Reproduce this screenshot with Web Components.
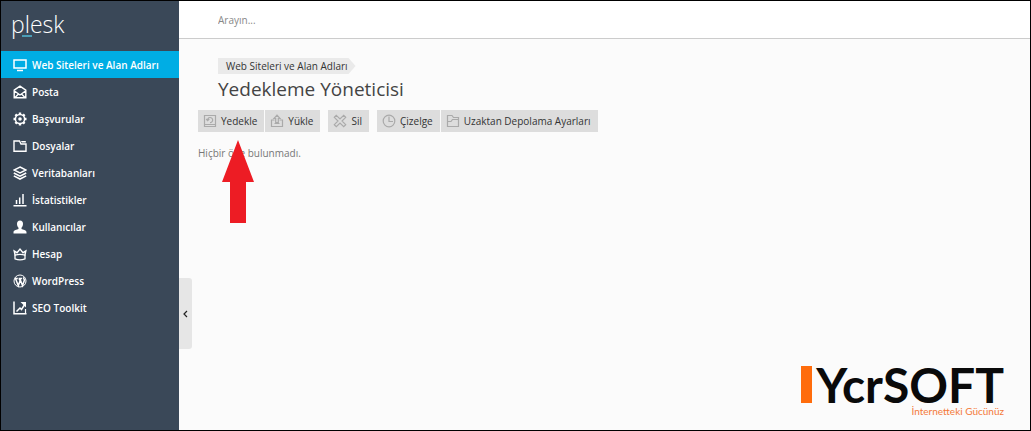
<!DOCTYPE html>
<html lang="tr">
<head>
<meta charset="utf-8">
<meta name="viewport" content="width=device-width, initial-scale=1">
<title>Yedekleme Yöneticisi</title>
<style>
  html, body { margin: 0; }
  body { font: 10px/16px "Open Sans", "Noto Sans", sans-serif; color: #333; background: #fbfbfb; }
</style>
</head>
<body>
<panel-shell>
  <plesk-brand slot="side"></plesk-brand>
  <side-nav slot="side">
    <nav-item icon="screen" active>Web Siteleri ve Alan Adları</nav-item>
    <nav-item icon="mail">Posta</nav-item>
    <nav-item icon="gear">Başvurular</nav-item>
    <nav-item icon="folder">Dosyalar</nav-item>
    <nav-item icon="layers">Veritabanları</nav-item>
    <nav-item icon="chart">İstatistikler</nav-item>
    <nav-item icon="user">Kullanıcılar</nav-item>
    <nav-item icon="crown">Hesap</nav-item>
    <nav-item icon="wordpress">WordPress</nav-item>
    <nav-item icon="seo">SEO Toolkit</nav-item>
  </side-nav>
  <search-bar slot="top"></search-bar>
  <page-heading>
    <crumb-link slot="path">Web Siteleri ve Alan Adları</crumb-link>
    Yedekleme Yöneticisi
  </page-heading>
  <tool-bar>
    <tool-group>
      <tool-button icon="backup">Yedekle<pointer-arrow slot="marker"></pointer-arrow></tool-button>
      <tool-button icon="upload">Yükle</tool-button>
    </tool-group>
    <tool-group><tool-button icon="remove">Sil</tool-button></tool-group>
    <tool-group>
      <tool-button icon="clock">Çizelge</tool-button>
      <tool-button icon="storage">Uzaktan Depolama Ayarları</tool-button>
    </tool-group>
  </tool-bar>
  <empty-note>Hiçbir öğe bulunmadı.</empty-note>
  <company-mark slot="foot"></company-mark>
</panel-shell>

<script>
const ICONS = {
  screen: '<path d="M1 2h12v8H1z" fill="none" stroke="currentColor" stroke-width="1.5"/><path d="M4 12.5h6" stroke="currentColor" stroke-width="1.5"/>',
  mail: '<path d="M1.2 5.2 7 1.2l5.800 4v7.500H1.200zM1.500 6 7 10l5.500-4M2 12.500l3.500-3.500M12 12.500 8.500 9" fill="none" stroke="currentColor" stroke-width="1.400"/>',
  gear: '<circle cx="7" cy="7" r="4.600" fill="none" stroke="currentColor" stroke-width="1.500"/><circle cx="7" cy="7" r="1.800" fill="currentColor"/><path d="M7 .5v2M7 11.500v2M.5 7h2M11.500 7h2M2.400 2.400l1.400 1.400M10.200 10.200l1.400 1.400M11.600 2.400l-1.400 1.400M3.800 10.200l-1.400 1.400" stroke="currentColor" stroke-width="2.400"/>',
  folder: '<path d="M1 2h5.500l1.500 3h5v7.200H1z" fill="none" stroke="currentColor" stroke-width="1.400"/><path d="M8 2h4.800v1.600H8.800z" fill="currentColor"/>',
  layers: '<path d="M7 1 13 4 7 7 1 4z" fill="none" stroke="currentColor" stroke-width="1.400"/><path d="M.8 7 7 10.100 13.200 7M.8 9.900 7 13l6.200-3.100" fill="none" stroke="currentColor" stroke-width="1.600"/>',
  chart: '<path d="M.5 12.800h13M3.500 7v4M6.700 4.500V11M10 1v10" fill="none" stroke="currentColor" stroke-width="1.500"/>',
  user: '<path d="M7 .5c2 0 3 1.300 3 3.200 0 1.600-.6 3.200-1.500 4v1.400c1.500.9 5 1 5 3.100v1.300H.5v-1.300c0-2.100 3.500-2.200 5-3.100V7.700C4.600 6.900 4 5.300 4 3.700 4 1.800 5 .5 7 .5z" fill="currentColor"/>',
  crown: '<path d="m2.200 8.500-1-4.600L4 5.700 7 2l3 3.700 2.800-1.800-1 4.600" fill="none" stroke="currentColor" stroke-width="1.400"/><path d="M2 8.200c3-1 7-1 10 0v3.600c-3 1.200-7 1.200-10 0z" fill="none" stroke="currentColor" stroke-width="1.300"/>',
  wordpress: '<circle cx="7" cy="7" r="6" fill="none" stroke="currentColor" stroke-width="1"/><path d="M1.800 4.600h3M2.600 4.700l2.700 7 1.800-4.900-1-2.200M5.600 4.600h3.500M7 5l2.500 6.500 1.800-4.900c.4-1.500-1.200-2-.6-3.200" fill="none" stroke="currentColor" stroke-width="1.500"/>',
  seo: '<path d="M1 .5v12.300h12.500M3.500 10.500 7 7l1.500 1.500L12 3" fill="none" stroke="currentColor" stroke-width="1.500"/><path d="M7.500 1h5.500v5.500z" fill="currentColor"/><path d="M12.500 8v5" stroke="currentColor" stroke-width="1.200"/>',
  backup: '<path d="M1.500 1.500h11v11h-11zM1.500 10.500h11M4.500 6.500a2.600 2.600 0 1 1 2.500 2.200M3.200 5l1.400 1.600L6.300 5" fill="none" stroke="currentColor" stroke-width="1.200"/>',
  upload: '<path d="M4.500 6H1.500v6.500h11V6H9.500M4.500 9.500h5M5.700 8.500v-4H4L7 1.200l3 3.300H8.300v4z" fill="none" stroke="currentColor" stroke-width="1.200"/>',
  remove: '<path d="M3.300 1.300 7 5l3.700-3.700 2 2L9 7l3.700 3.700-2 2L7 9l-3.700 3.700-2-2L5 7 1.300 3.300z" fill="none" stroke="currentColor" stroke-width="1.200"/>',
  clock: '<circle cx="7" cy="7" r="5.800" fill="none" stroke="currentColor" stroke-width="1.200"/><path d="M7 2.500V7.500h4" fill="none" stroke="currentColor" stroke-width="1.200"/>',
  storage: '<path d="M1.500 12.500v-11H6l1.500 2h5v9zM1.500 7.500H5l1.500-2h6" fill="none" stroke="currentColor" stroke-width="1.200"/>'
};
const icon = name => `<svg width="14" height="14" viewBox="0 0 14 14" aria-hidden="true">${ICONS[name] || ''}</svg>`;

function define(name, render) {
  customElements.define(name, class extends HTMLElement {
    connectedCallback() {
      if (!this.shadowRoot) this.attachShadow({ mode: 'open' }).innerHTML = render(this);
    }
  });
}

define('panel-shell', () => `
  <style>
    :host { display: grid; grid-template-columns: 178px minmax(0, 1fr); box-sizing: border-box; min-height: 100vh; border: 1px solid #000; }
    aside { background: #3a4858; }
    .content { display: flex; flex-direction: column; }
    .row { flex: 1; display: flex; }
    main { flex: 1; display: flex; flex-direction: column; align-items: flex-start; padding: 19px 26px 11px 6px; }
    .foot { margin-top: auto; align-self: flex-end; }
    .fold { margin: 239px 0 0; align-self: flex-start; width: 13px; height: 71px; padding: 0; border: 0; border-radius: 0 3px 3px 0; background: #e6e6e6; color: #222; }
    .fold svg { display: block; margin: 0 auto; }
  </style>
  <aside><slot name="side"></slot></aside>
  <div class="content">
    <slot name="top"></slot>
    <div class="row">
      <button class="fold" aria-label="Menüyü daralt"><svg width="5" height="8" viewBox="0 0 5 8"><path d="M4 1 1 4l3 3" fill="none" stroke="currentColor" stroke-width="1.200"/></svg></button>
      <main><slot></slot><div class="foot"><slot name="foot"></slot></div></main>
    </div>
  </div>`);

define('plesk-brand', () => `
  <style>
    :host { display: block; height: 50px; }
    a { position: relative; display: inline-block; margin: 8px 0 0 10px; font-size: 23px; line-height: 30px; font-weight: 300; color: #fff; text-decoration: none; }
    a::after { content: ""; position: absolute; left: 11px; bottom: 2px; width: 10px; height: 2px; background: #4b9db5; }
  </style>
  <a href="#">plesk</a>`);

define('side-nav', () => `
  <style>:host { display: block; } nav { display: flex; flex-direction: column; }</style>
  <nav><slot></slot></nav>`);

define('nav-item', el => `
  <style>
    :host { display: block; }
    a { display: flex; align-items: center; gap: 5px; height: 27px; padding-left: 12px; color: #fff; font-weight: 600; text-decoration: none; white-space: nowrap; }
    :host([active]) a { background: #00ade4; }
    svg { flex: none; }
  </style>
  <a href="#">${icon(el.getAttribute('icon'))}<span><slot></slot></span></a>`);

define('search-bar', () => `
  <style>
    :host { display: block; background: #fff; border-bottom: 1px solid #ccc; }
    input { display: block; box-sizing: border-box; width: 100%; height: 37px; padding: 0 39px; border: 0; background: none; font: inherit; color: #333; outline: 0; }
    input::placeholder { color: #888; opacity: 1; }
  </style>
  <input type="search" placeholder="Arayın..." aria-label="Arayın">`);

define('page-heading', () => `
  <style>
    :host { display: block; margin-left: 20px; }
    h1 { margin: 0 0 6px; font-size: 19px; line-height: 30px; font-weight: 400; color: #444; }
  </style>
  <slot name="path"></slot>
  <h1><slot></slot></h1>`);

define('crumb-link', () => `
  <style>
    :host { display: block; }
    a { display: inline-block; vertical-align: top; padding: 0 8px; background: #eaeaea; color: #333; text-decoration: none; clip-path: polygon(0 0, calc(100% - 7px) 0, 100% 50%, calc(100% - 7px) 100%, 0 100%); }
  </style>
  <a href="#"><slot></slot></a>`);

define('tool-bar', () => `
  <style>:host { display: flex; gap: 8px; }</style><slot></slot>`);

define('tool-group', () => `
  <style>:host { display: flex; gap: 1px; }</style><slot></slot>`);

define('tool-button', el => `
  <style>
    :host { display: block; position: relative; }
    button { display: flex; align-items: center; gap: 4px; height: 22px; padding: 0 7px 0 5px; border: 0; background: #ddd; color: #333; font: inherit; white-space: nowrap; }
    svg { color: #aaa; flex: none; }
  </style>
  <button type="button">${icon(el.getAttribute('icon'))}<span><slot></slot></span></button>
  <slot name="marker"></slot>`);

define('pointer-arrow', () => `
  <style>
    :host { position: absolute; left: 24px; top: 30px; z-index: 1; pointer-events: none; }
    svg { display: block; }
  </style>
  <svg width="32" height="83" viewBox="0 0 32 83" aria-hidden="true"><path d="M16 0 32 42H24V83H8V42H0z" fill="#ed1c24"/></svg>`);

define('empty-note', () => `
  <style>:host { display: block; margin-top: 13px; color: #777; }</style><slot></slot>`);

define('company-mark', () => `
  <style>
    :host { display: grid; grid-template-columns: 11px auto; column-gap: 4px; }
    i { background: #ff6c0c; }
    b { font: 700 48px/37px Lato, sans-serif; color: #0a0a0a; }
    small { grid-column: 1 / -1; justify-self: end; font: 10px/16px Lato, sans-serif; color: #f47a3a; }
  </style>
  <i></i><b>YcrSOFT</b><small>İnternetteki Gücünüz</small>`);
</script>
</body>
</html>
